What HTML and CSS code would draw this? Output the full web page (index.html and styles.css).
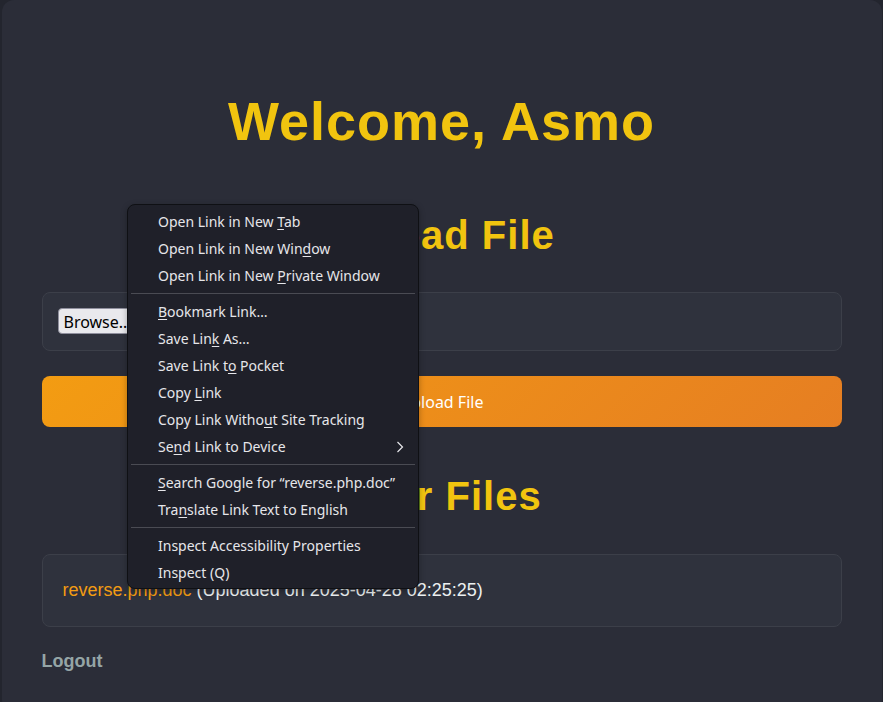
FILE: index.html
```html
<!DOCTYPE html>
<html lang="en">
<head>
<meta charset="utf-8">
<title>Dashboard</title>
<link rel="stylesheet" href="styles.css">
</head>
<body>
<div class="container">
  <h1 class="title">Welcome, Asmo</h1>
  <h2 class="section-title">Upload File</h2>
  <form class="upload-form">
    <div class="file-box">
      <span class="file-input"><span class="browse-btn">Browse…</span><span class="file-status">No file selected.</span></span>
    </div>
    <button type="button" class="upload-btn">Upload File</button>
  </form>
  <h2 class="section-title files-title">Your Files</h2>
  <ul class="file-list">
    <li class="file-item"><a class="file-link" href="#">reverse.php.doc</a> (Uploaded on 2025-04-28 02:25:25)</li>
  </ul>
  <a class="logout" href="#">Logout</a>
</div>

<div class="context-menu">
  <div class="menu-item">Open Link in New <u>T</u>ab</div>
  <div class="menu-item">Open Link in New Win<u>d</u>ow</div>
  <div class="menu-item">Open Link in New <u>P</u>rivate Window</div>
  <div class="menu-sep"></div>
  <div class="menu-item"><u>B</u>ookmark Link…</div>
  <div class="menu-item">Save Lin<u>k</u> As…</div>
  <div class="menu-item">Save Link t<u>o</u> Pocket</div>
  <div class="menu-item">Copy <u>L</u>ink</div>
  <div class="menu-item">Copy Link Witho<u>u</u>t Site Tracking</div>
  <div class="menu-item has-sub">Se<u>n</u>d Link to Device
    <svg class="sub-arrow" width="8" height="12" viewBox="0 0 8 12"><path d="M1.5 1 L6.5 6 L1.5 11" fill="none" stroke="#e6e6ea" stroke-width="1.2"/></svg>
  </div>
  <div class="menu-sep"></div>
  <div class="menu-item"><u>S</u>earch Google for “reverse.php.doc”</div>
  <div class="menu-item">Tra<u>n</u>slate Link Text to English</div>
  <div class="menu-sep"></div>
  <div class="menu-item">Inspect Accessibility Properties</div>
  <div class="menu-item">Inspect (Q)</div>
</div>
</body>
</html>
```

FILE: styles.css
```css
html, body {
  margin: 0;
  padding: 0;
}
body {
  background: #23252e;
  font-family: "Liberation Sans", Arial, sans-serif;
  font-size: 18px;
  color: #ecf0f1;
  min-height: 702px;
}
.container {
  max-width: 800px;
  margin: 0 auto;
  padding: 90px 40px 40px;
  background: #2b2d38;
  border-radius: 12px;
  min-height: 572px;
}
.title {
  margin: 0;
  text-align: center;
  color: #f1c40f;
  font-size: 54px;
  letter-spacing: 1px;
  line-height: 62px;
  font-weight: bold;
}
.section-title {
  margin: 60px 0 34px;
  text-align: center;
  color: #f1c40f;
  font-size: 40px;
  letter-spacing: 1px;
  line-height: 46px;
  font-weight: bold;
}
.files-title {
  margin-top: 46px;
  margin-bottom: 35px;
}
.upload-form {
  margin: 0;
}
.file-box {
  background: #2f323d;
  border: 1px solid #3c3f49;
  border-radius: 8px;
  padding: 15px 15px 16px;
  display: flex;
  align-items: center;
}
.file-input {
  display: inline-flex;
  align-items: center;
  gap: 6px;
  font-family: "Noto Sans", sans-serif;
  font-size: 16px;
}
.browse-btn {
  background: #e9e9ed;
  color: #000;
  border: 1px solid #8f8f9d;
  border-radius: 4px;
  padding: 0 5px;
  height: 26px;
  line-height: 26px;
  box-sizing: border-box;
}
.file-status {
  color: #ecf0f1;
}
.upload-btn {
  display: block;
  width: 100%;
  margin-top: 25px;
  padding: 16px 15px 14px;
  border: none;
  border-radius: 8px;
  background: linear-gradient(135deg, #f39c12, #e67e22);
  color: #fff;
  font-family: "Noto Sans", sans-serif;
  font-size: 16px;
  line-height: 21px;
  cursor: pointer;
}
.file-list {
  list-style: none;
  margin: 0;
  padding: 0;
}
.file-item {
  background: #2f323d;
  border: 1px solid #3c3f49;
  border-radius: 8px;
  padding: 20px;
  line-height: 31px;
  color: #ecf0f1;
}
.file-link {
  color: #f39c12;
  text-decoration: none;
}
.logout {
  display: inline-block;
  margin-top: 24px;
  color: #95a5a6;
  font-weight: bold;
  text-decoration: none;
  line-height: 21px;
}

.context-menu {
  position: absolute;
  left: 127px;
  top: 204px;
  width: 290px;
  padding: 3px 0 2px;
  background: #1f2029;
  border: 1px solid #0f1014;
  border-radius: 8px;
  font-family: "Noto Sans", sans-serif;
  font-size: 14px;
  color: #e6e6ea;
  box-shadow: 0 2px 6px rgba(0,0,0,0.3);
}
.menu-item {
  position: relative;
  height: 27px;
  line-height: 27px;
  padding-left: 30px;
  white-space: nowrap;
}
.menu-item u {
  text-decoration-thickness: 1px;
  text-underline-offset: 2px;
}
.sub-arrow {
  position: absolute;
  right: 14px;
  top: 8px;
}
.menu-sep {
  height: 1px;
  margin: 4px 3px;
  background: #4a4b53;
}
```
